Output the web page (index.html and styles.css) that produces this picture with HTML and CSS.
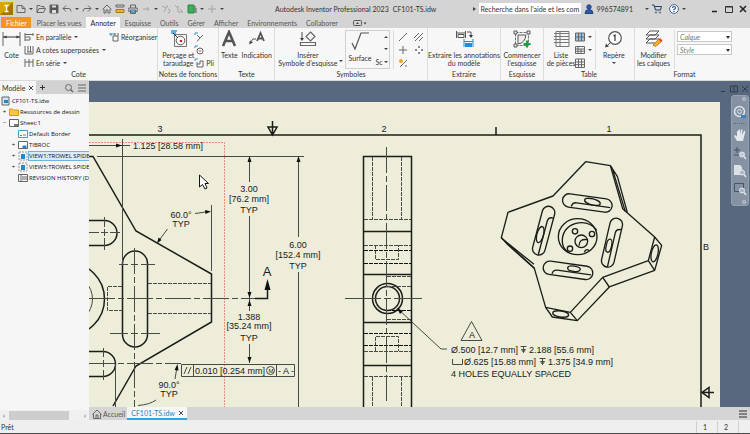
FILE: index.html
```html
<!DOCTYPE html>
<html lang="fr">
<head>
    <meta charset="UTF-8">
    <meta name="viewport" content="width=device-width, initial-scale=1.0">
    <title>Autodesk Inventor Professional 2023 - CF101-TS.idw</title>
    <link rel="stylesheet" href="styles.css">
</head>
<body>
    <div class="app">
        <header class="titlebar">
            <div class="quick">
                <button class="logo" aria-label="Inventor"><svg width="13" height="13" viewBox="0 0 13 13"><rect width="13" height="13" fill="#d9a300"/><path d="M0 13L13 0V13z" fill="#a87400"/><path d="M4.500 3.500h4M4.500 9.500h4M6.500 3.500v6" stroke="#fff" stroke-width="1.500"/></svg></button>
                <button aria-label="Nouveau"><svg class="ico" viewBox="0 0 10 10"><path d="M1 1.500h5l3 3v4H1zM6 1.500v3h3"/></svg></button>
                <span class="caret"></span>
                <button aria-label="Ouvrir"><svg class="ico" viewBox="0 0 10 10"><path d="M1 8.500v-7h3l1 1h3v2M1 8.500l2-4h6.500l-2 4z"/></svg></button>
                <button aria-label="Enregistrer"><svg class="ico" viewBox="0 0 10 10"><path d="M1 1h8v8H1z" fill="#555"/><path d="M3 1.500h4v2H3zM3 6h4v3H3z" fill="#ddd" stroke="none"/></svg></button>
                <button aria-label="Annuler"><svg class="ico" viewBox="0 0 10 10"><path d="M4 1.500L1 4.500l3 3M1 4.500h6q2 0 2 3"/></svg></button>
                <span class="caret"></span>
                <button aria-label="Rétablir"><svg class="ico" viewBox="0 0 10 10"><path d="M6 1.500l3 3-3 3M9 4.500H3q-2 0-2 3"/></svg></button>
                <span class="caret"></span>
                <button aria-label="Accueil"><svg class="ico" viewBox="0 0 10 10"><path d="M.500 5.500L5 1l4.500 4.500M2 5v4h2V6h2v3h2V5"/></svg></button>
                <button aria-label="Mesurer"><svg class="ico" viewBox="0 0 10 10"><path d="M1 1h8v2H1z"/><path d="M1 5.500h8v3H1z" fill="#f0b030" stroke="#b07a10"/></svg></button>
                <button aria-label="Imprimer"><svg class="ico" viewBox="0 0 10 10"><path d="M2.500 4V1h5v3M.800 4h8.400v3.500H.800zM2.500 6h5v3.500h-5z"/><path d="M3 6.500h4v2.500H3z" fill="#4aa3d8" stroke="none"/></svg></button>
                <button aria-label="Sélection"><svg class="ico pale" viewBox="0 0 10 10"><path d="M2 5h6M6 3l2 2-2 2"/></svg></button>
                <span class="caret"></span>
                <button aria-label="Matériau"><svg class="ico pale" viewBox="0 0 10 10"><path d="M1 2l4 2-2 4M6 1v3M7 5a2 2 0 1 1-.100 4"/></svg></button>
                <button aria-label="Apparence"><svg class="ico pale" viewBox="0 0 10 10"><path d="M1 1l3 3M4 2v6h5M6 5l3 3"/></svg></button>
                <button aria-label="iLogic"><svg class="ico" viewBox="0 0 10 10"><path d="M1 1h6v8H1z" fill="#3fae5a" stroke="#2b8a43"/><path d="M8 2v7M9 4v5" stroke="#666"/></svg></button>
                <span class="caret"></span>
                <button aria-label="Ajouter"><svg class="ico pale" viewBox="0 0 10 10"><path d="M1 5h8M5 1v8"/></svg></button>
                <span class="caret"></span>
            </div>
            <div class="app-title"><span>Autodesk Inventor Professional 2023</span><span>CF101-TS.idw</span></div>
            <div class="account">
                <span class="caret right"></span>
                <input class="search" type="text" aria-label="Recherche" value="Recherche dans l'aide et les com">
                <button class="user"><svg class="ico" viewBox="0 0 10 10"><circle cx="5" cy="3" r="2.200" fill="#2b5ca8" stroke="#1f4480"/><path d="M1 9.500q0-4 4-4t4 4z" fill="#2b5ca8" stroke="#1f4480"/></svg>996574891</button>
                <span class="caret"></span>
                <button class="cart" aria-label="Panier"><svg class="ico" viewBox="0 0 10 10"><path d="M0 1h2l1.500 5h5L9.500 2.500H3" stroke="#1f3f70"/><circle cx="4" cy="8.500" r=".700"/><circle cx="8" cy="8.500" r=".700"/></svg></button>
                <button aria-label="Aide"><svg class="ico" viewBox="0 0 10 10"><circle cx="5" cy="5" r="4.400" fill="#fff" stroke="#44638c"/><path d="M3.500 4q0-1.500 1.500-1.500T6.500 4Q6.500 4.800 5 5.500v.700M5 7v1" stroke="#1f4fa0" stroke-width="1.200"/></svg></button>
                <span class="caret"></span>
            </div>
            <div class="win">
                <button aria-label="Réduire"><svg class="ico" viewBox="0 0 10 10"><path d="M2 7.500h5" stroke="#222" stroke-width="1.500"/></svg></button>
                <button aria-label="Agrandir"><svg class="ico" viewBox="0 0 10 10"><path d="M1.500 2.500h7v6h-7zM1.500 3h7" stroke="#333"/></svg></button>
                <button aria-label="Fermer"><svg class="ico" viewBox="0 0 10 10"><path d="M2 2l6 6M8 2L2 8" stroke="#222" stroke-width="1.500"/></svg></button>
            </div>
        </header>

        <nav class="tabs">
            <button class="tab file">Fichier</button>
            <button class="tab">Placer les vues</button>
            <button class="tab active">Annoter</button>
            <button class="tab">Esquisse</button>
            <button class="tab">Outils</button>
            <button class="tab">Gérer</button>
            <button class="tab">Afficher</button>
            <button class="tab">Environnements</button>
            <button class="tab">Collaborer</button>
            <button class="tab toggle" aria-label="Affichage du ruban"><svg width="14" height="8" viewBox="0 0 14 8"><rect x=".500" y="1.500" width="8" height="5" rx="1" fill="none" stroke="#555"/><path d="M3 5l1.500-2L6 5zM10.500 3.500h3L12 5.500z" fill="#444"/></svg></button>
        </nav>

        <div class="ribbon">
            <section class="group g-cote">
                <div class="tools">
                    <button class="big"><svg width="19" height="18" viewBox="0 0 19 18"><path d="M1 2v14M18 2v14" stroke="#666" fill="none"/><path d="M1 7h17" stroke="#333"/><path d="M1.500 7l3-1.500v3zM17.500 7l-3-1.500v3z" fill="#333"/></svg>Cote</button>
                    <div class="stack">
                        <button><svg class="ico" viewBox="0 0 10 10"><path d="M1 1v8M9 1v3M1 2.500h8M1 5h5v3H1"/></svg>En parallèle <i class="caret"></i></button>
                        <button><svg class="ico" viewBox="0 0 10 10"><path d="M1 1v8h8V1M4 1v6M6.500 1v6M3 7h5"/></svg>A cotes superposées <i class="caret"></i></button>
                        <button><svg class="ico" viewBox="0 0 10 10"><path d="M1 1v8M5 1v8M9 1v8M1 4h8"/></svg>En série <i class="caret"></i></button>
                    </div>
                    <div class="stack">
                        <button><svg class="ico" viewBox="0 0 10 10"><path d="M0 2h6M2 1v3" stroke="#3a8fd0"/><path d="M4 4h5v5H4zM6 4V1M9 4V1"/></svg>Réorganiser</button>
                    </div>
                </div>
                <h2>Cote</h2>
            </section>
            <section class="group g-notes">
                <div class="tools">
                    <button class="big"><svg width="19" height="18" viewBox="0 0 19 18"><path d="M2 1h6M2 3h5" stroke="#2f9be0" stroke-width="1.400"/><path d="M5.500 4.500h12v12h-12z" fill="none" stroke="#777"/><circle cx="11.500" cy="10.500" r="4.300" fill="#fff" stroke="#555"/><path d="M4 3l5 5" stroke="#333"/><circle cx="12" cy="11" r="1.300" fill="#d02020"/></svg>Perçage et<br>taraudage</button>
                    <div class="stack">
                        <button aria-label="Chanfrein"><svg class="ico" viewBox="0 0 10 10"><path d="M1 1h3M1 1v2" stroke="#3a8fd0"/><path d="M3 3l3 3 3-3M6 6L3 9.500"/></svg></button>
                        <button aria-label="Poinçon"><svg class="ico" viewBox="0 0 10 10"><path d="M1 1h3M1 1v2" stroke="#3a8fd0"/><circle cx="6" cy="6" r="3"/><circle cx="6" cy="6" r=".800" fill="#d02020" stroke="none"/></svg></button>
                        <button><svg class="ico" viewBox="0 0 10 10"><path d="M1 1h3M1 1v2" stroke="#3a8fd0"/><path d="M3 4v5h6V3H6v3H3"/></svg>Pli</button>
                    </div>
                </div>
                <h2>Notes de fonctions</h2>
            </section>
            <section class="group g-texte">
                <div class="tools">
                    <button class="big"><svg width="16" height="18" viewBox="0 0 16 18"><path d="M2 16L8 2l6 14M4.500 11h7" fill="none" stroke="#555" stroke-width="2.600"/></svg>Texte</button>
                    <button class="big"><svg width="18" height="18" viewBox="0 0 18 18"><path d="M9 11l3.500-8L16 11M10.300 8.500h4.500" fill="none" stroke="#555" stroke-width="1.800"/><path d="M8 9H5l-3 4" fill="none" stroke="#555"/><path d="M1 14.500l1-4 3 2z" fill="#444"/></svg>Indication</button>
                </div>
                <h2>Texte</h2>
            </section>
            <section class="group g-symboles">
                <div class="tools">
                    <button class="big"><svg width="18" height="18" viewBox="0 0 18 18"><path d="M3 2v8M11.500 2l4.500 4.500-4.500 4.500L7 6.500zM1.500 12.500h15v3h-15z" fill="none" stroke="#666" stroke-width="1.200"/><path d="M1 8l2 3 2-3z" fill="#444"/></svg>Insérer<br>Symbole d'esquisse</button>
                    <i class="caret"></i>
                    <div class="gallery">
                        <button class="big"><svg width="20" height="20" viewBox="0 0 20 20"><path d="M2 12l3 6L11 2h8" fill="none" stroke="#555" stroke-width="1.200"/></svg>Surface</button>
                        <span class="cut">Sc</span>
                        <div class="scroller"><i class="caret up"></i><i class="caret"></i><i class="caret"></i></div>
                    </div>
                    <div class="iconset">
                        <button aria-label="Axe"><svg class="ico" viewBox="0 0 10 10"><path d="M1 9l8-8"/></svg></button>
                        <button aria-label="Hachures"><svg class="ico" viewBox="0 0 10 10"><path d="M0 6l5-5M1 9l8-8M5 9l4-4"/></svg></button>
                        <button aria-label="Marque de centre"><svg class="ico" viewBox="0 0 10 10"><path d="M1 5h8M5 1v8"/></svg></button>
                        <button aria-label="Réseau centré"><svg class="ico" viewBox="0 0 10 10"><path d="M5 1v2M5 7v2M1 5h2M7 5h2" stroke-width="1.500"/></svg></button>
                        <button aria-label="Axe automatique"><svg class="ico" viewBox="0 0 10 10"><path d="M2 9l7-7M7 8h2"/><circle cx="3" cy="3" r="2" fill="#f5a623" stroke="none"/></svg></button>
                    </div>
                </div>
                <h2>Symboles</h2>
            </section>
            <section class="group g-extraire">
                <div class="tools">
                    <button class="big"><svg width="19" height="18" viewBox="0 0 19 18"><path d="M1.500 1v7M10.500 1v7M1 3h10M3 4.500h6v3H3zM12 2h4v4" fill="none" stroke="#555"/><path d="M14 5h4l-2 3z" fill="#333"/><path d="M9 9v8M18 9v8M9 11.500h9" stroke="#1f8fdc"/><path d="M10 13h7v4h-7z" fill="#1f8fdc"/></svg>Extraire les annotations<br>du modèle</button>
                </div>
                <h2>Extraire</h2>
            </section>
            <section class="group g-esquisse">
                <div class="tools">
                    <button class="big"><svg width="19" height="18" viewBox="0 0 19 18"><path d="M2.500 2.500h13v13h-13z" fill="none" stroke="#777" stroke-dasharray="3 1"/><path d="M5 5v9q7-1 8-9zM1 1h3v3H1zM14 1h3v3h-3zM1 14h3v3H1z" fill="#eee" stroke="#555"/><path d="M14 10.500v7M10.500 14h7" stroke="#15a03c" stroke-width="2.200"/></svg>Commencer<br>l'esquisse</button>
                </div>
                <h2>Esquisse</h2>
            </section>
            <section class="group g-table">
                <div class="tools">
                    <button class="big"><svg width="19" height="18" viewBox="0 0 19 18"><path d="M2 3.500h15M4 1.500h13v15H4zM2 6.500h15M2 9.500h15M2 12.500h15M8 2v14" fill="none" stroke="#777"/></svg>Liste<br>de pièces</button>
                    <div class="stack">
                        <button aria-label="Table de perçages"><svg class="ico" viewBox="0 0 10 10"><path d="M.500 1h9v8h-9z" fill="#9cc4e4"/><path d="M3.500 1v8M6.500 1v8M1 5h8"/></svg><i class="caret"></i></button>
                        <button aria-label="Table de révisions"><svg class="ico" viewBox="0 0 10 10"><path d="M.500 1.500h9v7h-9zM.500 4h9M3 2v6M6 4v4M.500 6.200h9"/></svg><i class="caret"></i></button>
                        <button aria-label="Table générale"><svg class="ico" viewBox="0 0 10 10"><path d="M.500 1h9v8.500h-9zM.500 4h9M.500 6.700h9M3.500 1v8M6.500 1v8"/></svg></button>
                    </div>
                    <button class="big split"><svg width="19" height="18" viewBox="0 0 19 18"><circle cx="11" cy="8" r="6.300" fill="#fff" stroke="#555" stroke-width="1.200"/><path d="M9.500 6L11 5v6" fill="none" stroke="#333" stroke-width="1.200"/><path d="M6.500 12.500l-4 4" stroke="#555"/><path d="M1 17.500l1-4 3 3z" fill="#444"/></svg>Repère<i class="caret"></i></button>
                </div>
                <h2>Table</h2>
            </section>
            <section class="group g-format">
                <div class="tools">
                    <button class="big"><svg width="19" height="18" viewBox="0 0 19 18"><path d="M2 13l4-4h9l-4 4zM2 9l4-4h9l-4 4zM2 5l4-4h9l-4 4z" fill="#fff" stroke="#555"/><path d="M9 15l6-6 2.500 2.500-6 5z" fill="#f5b52a" stroke="#b97f14"/><path d="M14.500 9.500l1.500-1.500 2.500 2.500-1.500 1.500z" fill="#d8423a"/></svg>Modifier<br>les calques</button>
                    <div class="combos">
                        <span class="combo"><select aria-label="Calque"><option>Calque</option></select></span>
                        <span class="combo"><select aria-label="Style"><option>Style</option></select></span>
                    </div>
                </div>
                <h2>Format</h2>
            </section>
        </div>

        <main class="workspace">
            <aside class="browser">
                <div class="browser-tabs">
                    <button class="browser-tab">Modèle <svg width="6" height="6" viewBox="0 0 6 6"><path d="M1 1l4 4M5 1L1 5" stroke="#444"/></svg></button>
                    <button aria-label="Ajouter un panneau"><svg width="7" height="7" viewBox="0 0 7 7"><path d="M3.500 1v5M1 3.500h5" stroke="#333"/></svg></button>
                    <button class="push" aria-label="Rechercher"><svg class="ico" viewBox="0 0 10 10"><circle cx="4.500" cy="4.500" r="3"/><path d="M6.700 6.700L9 9" stroke-width="1.500"/></svg></button>
                    <button aria-label="Menu"><svg class="ico" viewBox="0 0 10 10"><path d="M1 2h8M1 5h8M1 8h8"/></svg></button>
                </div>
                <ul class="tree">
                    <li><svg class="ico" viewBox="0 0 10 10"><path d="M1 1h7v8H1z" fill="#cfe6f6"/><path d="M3 4h4v3H3z" fill="#2288cc" stroke="none"/></svg>CF101-TS.idw</li>
                    <li><b>+</b><svg class="ico" viewBox="0 0 10 10"><path d="M.500 2h3l1 1h5v5.500h-9z" fill="#f7c548" stroke="#d59b18"/></svg>Ressources de dessin</li>
                    <li><b>−</b><svg class="ico" viewBox="0 0 10 10"><path d="M.500 1.500h9v7h-9z" fill="#fff"/><path d="M5 6h4v2H5z" fill="#777" stroke="none"/></svg>Sheet:1</li>
                    <li class="sub"><b></b><svg class="ico" viewBox="0 0 10 10"><path d="M.500 1.500h9v7h-9z" fill="#fff" stroke="#4a98cc"/><path d="M2 6.500h2M5 6h3" stroke="#2f86c4"/></svg>Default Border</li>
                    <li class="sub"><b>+</b><svg class="ico" viewBox="0 0 10 10"><path d="M.500 1.500h9v7h-9z" fill="#fff"/><path d="M4.500 5.500h4v2.500h-4z" fill="#2288cc" stroke="none"/></svg>TIBROC</li>
                    <li class="sub"><b>+</b><svg class="ico" viewBox="0 0 10 10"><path d="M1 1h8v8H1z" stroke="#999" stroke-dasharray="2 1"/><path d="M3 3h4v5H3z" fill="#2288cc" stroke="none"/></svg><mark>VIEW1:TROWEL SPIDE</mark></li>
                    <li class="sub"><b>+</b><svg class="ico" viewBox="0 0 10 10"><path d="M1 1h8v8H1z" stroke="#999" stroke-dasharray="2 1"/><path d="M3 3h4v5H3z" fill="#2288cc" stroke="none"/></svg>VIEW5:TROWEL SPIDE</li>
                    <li class="sub"><b></b><svg class="ico" viewBox="0 0 10 10"><path d="M.500 1.500h9v7h-9zM3 2v6M4 4h5M4 6h5"/></svg>REVISION HISTORY (D</li>
                </ul>
                <div class="hscroll"><span>‹</span><div class="thumb"></div><span>›</span></div>
            </aside>

            <div class="document">
                <div class="canvas">
                    <svg class="sheet" viewBox="89 102 631 305" preserveAspectRatio="xMinYMin slice">
                        <!-- sheet border and zone marks -->
                        <g class="edge">
                            <path d="M89 135H701V407"/>
                            <path d="M496 127v8M272.500 121v14M268 127h9l-4.500 8zM702 392.500h12M709 387.500v10l-7-5z"/>
                        </g>
                        <path class="select" d="M89 142.500H224.500V407"/>

                        <!-- front view -->
                        <g class="edge">
                            <path d="M89 156.500h4L136 231l75.500 43v48L136 366l-23 40"/>
                            <rect x="122.500" y="251" width="25" height="96" rx="12.500"/>
                            <path d="M89 220.500h15.500a12.500 12.500 0 0 1 0 25H89M89 351.500h14a12.500 12.500 0 0 1 0 25H89"/>
                            <circle cx="68" cy="299" r="36.500"/>
                        </g>
                        <g class="thin">
                            <circle cx="68" cy="299" r="24.500"/>
                            <path d="M122.500 139v125M89 145.500h41M97 156.500h207M211.500 205v66M115.500 364v43"/>
                            <path d="M104.500 217v10M104.500 229v7M104.500 238v12M89 232.500h10M101 232.500h7M110 232.500h10"/>
                            <path d="M103.500 348v9M103.500 360v7M103.500 370v10M119 264.500h9M131 264.500h7M141 264.500h14M110 333.500h18M131 333.500h7M141 333.500h19"/>
                            <path class="center" d="M134.500 248V407M89 298.500H246M89 363.500h92"/>
                            <path class="hidden" d="M148 283.500h63M148 313.500h63M122 286.500h-14.500v24h15"/>
                            <path d="M195 213.500l14-2M167.500 229l-9 12M175 379l2-12M138 405.500q12-1 18-5.500"/>
                        </g>

                        <!-- dimensions -->
                        <g class="thin">
                            <path d="M249.500 158v24M249.500 216v95M249.500 344v19M298.500 158v79M298.500 272v135M244 298.500h12"/>
                            <path d="M181.500 364.500h113v12h-113zM193.500 364.500v12M276.500 364.500v12M184 374l3-7M188 374l3-7"/>
                            <circle cx="270.500" cy="370.500" r="4"/>
                        </g>
                        <path class="edge" d="M255 298.500h12.500V286"/>
                        <path class="fill" d="M122 145.500l-6-2v4zM249.500 156l-2 6h4zM298.500 156l-2 6h4zM249.500 298l-2-6h4zM249.500 300l-2 6h4zM249.500 363l-2-6h4zM211 211.500l-6-1.500.500 4zM157 243.500l1.500-6 3 2.500zM177.500 364l-3 6 4 .500zM267.500 279l-3 11h6z"/>
                        <g class="note mid">
                            <text x="160" y="132">3</text>
                            <text x="384" y="132">2</text>
                            <text x="609" y="132">1</text>
                            <text x="706" y="250">B</text>
                            <text x="181" y="218">60.0°</text>
                            <text x="181" y="227">TYP</text>
                            <text x="249" y="192">3.00</text>
                            <text x="249" y="202">[76.2 mm]</text>
                            <text x="249" y="213">TYP</text>
                            <text x="298" y="248">6.00</text>
                            <text x="298" y="258">[152.4 mm]</text>
                            <text x="298" y="269">TYP</text>
                            <text x="249" y="320">1.388</text>
                            <text x="249" y="329">[35.24 mm]</text>
                            <text x="249" y="341">TYP</text>
                            <text x="169" y="388">90.0°</text>
                            <text x="169" y="397">TYP</text>
                            <text x="286" y="374">- A -</text>
                            <text x="472" y="338">A</text>
                            <text class="letter" x="267" y="276">A</text>
                            <text class="tiny" x="271" y="373">M</text>
                        </g>
                        <g class="note">
                            <text x="133" y="149">1.125 [28.58 mm]</text>
                            <text x="195" y="374">0.010 [0.254 mm]</text>
                            <text x="451" y="353">Ø.500 [12.7 mm]</text>
                            <text x="529" y="353">2.188 [55.6 mm]</text>
                            <text x="464" y="365">Ø.625 [15.88 mm]</text>
                            <text x="548" y="365">1.375 [34.9 mm]</text>
                            <text x="451" y="377">4 HOLES EQUALLY SPACED</text>
                        </g>
                        <path class="thin" d="M520.500 346.500h6M523.500 346.500v6M521.500 349.500h4l-2 3zM539.500 358.500h6M542.500 358.500v6M540.500 361.500h4l-2 3zM452.500 359v5.500h10V359M398 309l43 40h6M471.500 321.500l-10.500 19h21z"/>

                        <!-- side view -->
                        <g class="edge">
                            <path d="M363.500 407V156.500h48V407M363.500 231.500h48M363.500 274.500h48M363.500 322.500h48M363.500 365.500h48"/>
                            <circle cx="387.500" cy="298.500" r="15"/>
                            <circle cx="387.500" cy="298.500" r="12"/>
                        </g>
                        <g class="thin">
                            <path class="hidden" d="M372.500 157v62M401.500 157v62M364 219.500h47M364 245.500h47M375.500 245v14.500h23V245M387 276.500h24M387 286.500h24M387 319.500h24M364 351.500h47M375.500 351v-14.500h23V351M364 376.500h47M372.500 377v30M401.500 377v30"/>
                            <path class="hidden bold" d="M364 250.500h47M364 263.500h47M387 310.500h24M364 333.500h47M364 345.500h47"/>
                            <path class="center" d="M386.500 147v256"/>
                            <path d="M345 298.500h36M384 298.500h7M394 298.500h28"/>
                        </g>
                        <path class="fill" d="M397 308l6 3-3 3z"/>

                        <!-- isometric view, drawn at three times its size -->
                        <g class="iso" transform="translate(480 115) scale(.33333)">
                            <path d="M317 140L391 152L428 281L524 366L545 391L524 466L388 516L292 617L217 606L197 577L163 460L64 368L84 292L219 243Z"/>
                            <path d="M391 152L412 184L442 292M396 158L436 290M64 368L82 388L163 460M66 371L162 448M524 366L505 437L524 466M505 437L368 487L388 516M368 487L271 592L292 617M271 592L197 577"/>
                            <ellipse cx="524" cy="415" rx="10" ry="26" transform="rotate(12 524 415)"/>
                            <ellipse cx="242" cy="597" rx="24" ry="9" transform="rotate(8 242 597)"/>
                            <g transform="translate(322 264) rotate(8)">
                                <rect x="-75" y="-20" width="150" height="40" rx="20"/>
                                <path d="M-46 17q2-13 14-13H70"/>
                                <ellipse cx="14" cy="-7" rx="24" ry="9" transform="rotate(6)"/>
                            </g>
                            <g transform="translate(264 466) rotate(8)">
                                <rect x="-75" y="-20" width="150" height="40" rx="20"/>
                                <path d="M-46 17q2-13 14-13H70"/>
                                <ellipse cx="17" cy="-7" rx="19" ry="8"/>
                            </g>
                            <g transform="translate(191 347) rotate(15)">
                                <rect x="-19" y="-75" width="38" height="150" rx="19"/>
                                <path d="M18-44Q3-44 3-30V74"/>
                                <ellipse cx="-7" cy="14" rx="10" ry="25"/>
                            </g>
                            <g transform="translate(396 383) rotate(13)">
                                <rect x="-19" y="-75" width="38" height="150" rx="19"/>
                                <path d="M18-44Q3-44 3-30V74"/>
                                <ellipse cx="-7" cy="11" rx="8" ry="20"/>
                            </g>
                            <ellipse cx="293" cy="365" rx="58" ry="54"/>
                            <path d="M350 345Q325 315 285 326Q245 340 247 382Q250 405 268 414"/>
                            <circle cx="285" cy="349" r="8"/>
                            <circle cx="336" cy="357" r="8"/>
                            <circle cx="270" cy="401" r="8"/>
                            <circle cx="304" cy="379" r="19"/>
                            <path d="M322 374q-24-4-25 18M313 412q4-12 14-6"/>
                        </g>

                        <path class="pointer" d="M199.500 175v12l3-2.500 2.500 4.500 2-1-2-4.500h3.500z"/>
                    </svg>
                    <div class="doc-win">
                        <button aria-label="Réduire"><svg class="ico" viewBox="0 0 10 10"><path d="M3 7.500h4"/></svg></button>
                        <button aria-label="Restaurer"><svg class="ico" viewBox="0 0 10 10"><path d="M1.500 2h7v6h-7zM5 2v6"/></svg></button>
                        <button aria-label="Fermer"><svg class="ico" viewBox="0 0 10 10"><path d="M2 2l6 6M8 2L2 8"/></svg></button>
                    </div>
                    <div class="navbar">
                        <i class="knob"></i>
                        <button aria-label="Disque de navigation"><svg viewBox="0 0 14 14"><circle cx="6.500" cy="6.500" r="5" fill="none" stroke="#dde3ea" stroke-width="1.500"/><circle cx="6.500" cy="6.500" r="2" fill="none" stroke="#dde3ea"/><path d="M8 10h5v3H8z" fill="#3f7fc8"/></svg></button>
                        <hr>
                        <button aria-label="Panoramique"><svg viewBox="0 0 14 14"><path d="M4 13L1 8l1-1 2 1.500V3h1.500v4V1.500H7V7l1-5.500h1.500L9 7l2-4h1.500L11 9l-1 4z" fill="#e4e8ed"/></svg></button>
                        <button aria-label="Zoom"><svg viewBox="0 0 14 14"><path d="M4 1v6M1 4h6M1 9h5" stroke="#46556a"/><circle cx="9" cy="8.500" r="2.500" fill="#c3ccd6" stroke="#e4e8ed"/><path d="M11 10.500l2 2.500" stroke="#e4e8ed" stroke-width="1.500"/></svg></button>
                        <button aria-label="Zoom tout"><svg viewBox="0 0 14 14"><path d="M1 1h6l2 2v8H1z" fill="#dbe0e6"/><circle cx="9" cy="8.500" r="2.500" fill="#a9b6c4" stroke="#e4e8ed"/><path d="M11 10.500l2 2.500" stroke="#e4e8ed" stroke-width="1.500"/></svg></button>
                        <button aria-label="Zoom fenêtre"><svg viewBox="0 0 14 14"><path d="M1.500 1.500h9v8h-9z" fill="none" stroke="#46556a"/><circle cx="9" cy="8.500" r="2.500" fill="#a9b6c4" stroke="#e4e8ed"/><path d="M11 10.500l2 2.500" stroke="#e4e8ed" stroke-width="1.500"/></svg></button>
                        <i class="knob"></i>
                    </div>
                </div>
                <div class="doc-tabs">
                    <button class="doc-tab home"><svg class="ico" viewBox="0 0 10 10"><path d="M.500 5.500L5 1l4.500 4.500M1.500 5v4.500h7V5M4 9V6h2v3"/></svg>Accueil</button>
                    <button class="doc-tab current">CF101-TS.idw <svg width="6" height="6" viewBox="0 0 6 6"><path d="M1 1l4 4M5 1L1 5" stroke="#444"/></svg></button>
                    <button class="push" aria-label="Liste des documents"><svg class="ico" viewBox="0 0 10 10"><path d="M1 2h8M1 5h8M1 8h8" stroke-width="1.500"/></svg></button>
                </div>
            </div>
        </main>

        <footer class="status">
            <span class="ready">Prêt</span>
            <span class="cell">1</span>
            <span class="cell">2</span>
            <span class="grip"></span>
        </footer>
    </div>
</body>
</html>
```
FILE: styles.css
```css
* {
    box-sizing: border-box;
}

body {
    margin: 0;
    font-family: Lato, "Open Sans", sans-serif;
    font-size: 7px;
    line-height: 8px;
    color: #333;
    background: #d6d6d6;
}

button {
    display: flex;
    align-items: center;
    padding: 0;
    border: none;
    background: none;
    font: inherit;
    color: inherit;
    white-space: nowrap;
}

svg {
    flex: none;
    display: block;
}

.app {
    display: flex;
    flex-direction: column;
    height: 100vh;
    overflow: hidden;
    border-bottom: 1px solid #4a4a4a;
}

.ico {
    width: 10px;
    height: 10px;
    fill: none;
    stroke: #666;
}

.pale {
    stroke: #a4a4a4;
}

.caret {
    flex: none;
    width: 4px;
    border: 2px solid transparent;
    border-top-color: #444;
    border-bottom: none;
}

.caret.up {
    border-top: none;
    border-bottom: 2px solid #444;
}

.caret.right {
    width: 3px;
    border: 2px solid transparent;
    border-left: 3px solid #444;
    border-right: none;
}

.push {
    margin-left: auto;
}

/* title bar */
.titlebar {
    display: flex;
    align-items: center;
    height: 17px;
    flex: none;
    background: #d4d4d4;
}

.quick {
    display: flex;
    align-items: center;
    gap: 3px;
    width: 275px;
}

.app-title {
    display: flex;
    gap: 4px;
    flex: 1;
    white-space: nowrap;
}

.account {
    display: flex;
    align-items: center;
    gap: 3px;
}

.search {
    width: 102px;
    height: 11px;
    padding: 0 1px;
    border: none;
    background: #fff;
    font: inherit;
    color: #333;
}

.user {
    gap: 2px;
    margin-right: 9px;
}

.cart {
    margin-right: 4px;
}

.win {
    display: flex;
    gap: 4px;
    padding: 0 2px 0 24px;
}

/* ribbon tabs */
.tabs {
    display: flex;
    flex: none;
    height: 11px;
    background: #d4d4d4;
}

.tab {
    padding: 0 4px 0 5px;
    color: #555;
}

.tab.file {
    margin: 0 1px;
    background: #f7941d;
    color: #fff;
}

.tab.active {
    background: #fafafa;
    color: #222;
}

.tab.toggle {
    margin-left: 6px;
}

/* ribbon */
.ribbon {
    display: flex;
    flex: none;
    height: 53px;
    background: #f7f7f7;
    border-bottom: 1px solid #d8d8d8;
}

.group {
    display: flex;
    flex-direction: column;
    flex: none;
    border-right: 1px solid #dcdcdc;
}

.group h2 {
    margin: 0;
    font-size: 7px;
    font-weight: 400;
    line-height: 10px;
    text-align: center;
}

.tools {
    display: flex;
    justify-content: center;
    height: 41px;
    padding-top: 2px;
}

.g-cote { width: 158px; }
.g-notes { width: 61px; }
.g-texte { width: 56px; }
.g-symboles { width: 153px; }
.g-extraire { width: 73px; }
.g-esquisse { width: 43px; }
.g-table { width: 91px; }
.g-format { width: 99px; border-right: none; }

.big {
    flex-direction: column;
    justify-content: flex-start;
    text-align: center;
    line-height: 8px;
}

.big svg {
    margin-bottom: 3px;
}

.g-cote .tools {
    justify-content: flex-start;
    gap: 3px;
    padding-left: 2px;
}

.g-texte .tools {
    gap: 4px;
}

.stack {
    display: flex;
    flex-direction: column;
}

.stack button {
    gap: 2px;
    height: 13px;
}

.stack .caret {
    margin-left: 1px;
}

.g-symboles .tools > .caret {
    margin: 30px 2px 0 1px;
}

.gallery {
    display: flex;
    height: 39px;
    border: 1px solid #d0d0d0;
    padding-left: 3px;
}

.cut {
    align-self: flex-end;
    margin-left: 4px;
    line-height: 12px;
}

.scroller {
    display: flex;
    flex-direction: column;
    justify-content: space-around;
    padding: 0 1px;
}

.iconset {
    display: grid;
    grid-template-columns: 10px 10px;
    grid-auto-rows: 13px;
    column-gap: 6px;
    margin-left: 3px;
    padding-left: 4px;
    border-left: 1px solid #dcdcdc;
}

.split {
    width: 36px;
    margin-left: 3px;
    border-left: 1px solid #dcdcdc;
}

.split .caret {
    margin-top: 3px;
}

.combos {
    display: flex;
    flex-direction: column;
    gap: 2px;
    margin-left: 4px;
    padding: 1px 0 0 2px;
    border-left: 1px solid #dcdcdc;
}

.combo {
    position: relative;
    display: block;
}

.combo::after {
    content: "";
    position: absolute;
    right: 2px;
    top: 5px;
    border: 2px solid transparent;
    border-top: 3px solid #333;
    border-bottom: none;
}

.combo select {
    display: block;
    appearance: none;
    width: 55px;
    height: 11px;
    padding: 0 2px;
    border: 1px solid #c8c8c8;
    border-radius: 0;
    background: #fff;
    font: inherit;
    font-style: italic;
    color: #777;
}

/* model browser */
.workspace {
    display: flex;
    flex: 1;
    min-height: 0;
}

.browser {
    display: flex;
    flex-direction: column;
    width: 89px;
    flex: none;
    background: #f6f6f6;
}

.browser-tabs {
    display: flex;
    align-items: center;
    gap: 3px;
    height: 13px;
    padding-right: 2px;
    background: #d2d2d2;
}

.browser-tab {
    gap: 3px;
    height: 13px;
    padding: 0 2px;
    background: #f6f6f6;
}

.tree {
    flex: 1;
    margin: 0;
    padding: 1px 0 0 1px;
    list-style: none;
    overflow: hidden;
    font-family: "Open Sans", "Noto Sans", sans-serif;
    font-size: 6px;
    font-weight: 500;
}

.tree li {
    display: flex;
    align-items: center;
    height: 11px;
    gap: 1px;
    white-space: nowrap;
    color: #111;
}

.tree b {
    flex: none;
    width: 7px;
    font-weight: 400;
    text-align: center;
}

.tree .sub {
    padding-left: 9px;
}

.tree mark {
    background: #d8ebf8;
    outline: 1px solid #6fb4e0;
    color: inherit;
}

.hscroll {
    display: flex;
    align-items: center;
    gap: 4px;
    height: 10px;
    padding: 0 3px;
    background: #f0f0f0;
}

.hscroll .thumb {
    width: 60px;
    height: 9px;
    background: #cdcdcd;
}

.hscroll span:last-child {
    margin-left: auto;
}

/* drawing window */
.document {
    display: flex;
    flex-direction: column;
    flex: 1;
    min-width: 0;
}

.canvas {
    position: relative;
    display: flex;
    flex: 1;
    min-height: 0;
    padding: 21px 30px 0 0;
    background: #58697f;
}

.sheet {
    flex: 1;
    min-width: 0;
    height: 100%;
    background: #ededd9;
}

.doc-win {
    position: absolute;
    top: 3px;
    right: 0;
    display: flex;
    gap: 1px;
}

.doc-win .ico {
    stroke: #333b46;
}

.navbar {
    position: absolute;
    top: 14px;
    right: 1px;
    display: flex;
    flex-direction: column;
    align-items: center;
    gap: 4px;
    width: 18px;
    padding: 1px 0;
    border: 1px solid #95a1b0;
    border-radius: 3px;
    background: #8592a3;
}

.navbar svg {
    width: 14px;
    height: 14px;
}

.navbar hr {
    width: 12px;
    margin: 0;
    border: none;
    border-top: 1px dotted #5a6a80;
}

.knob {
    align-self: flex-end;
    width: 4px;
    height: 4px;
    margin-right: 2px;
    border: 1px solid #c8d0da;
    border-radius: 50%;
}

/* strokes of the drawing */
.edge,
.thin,
.iso {
    fill: none;
    stroke: #1c1c1a;
}

.edge {
    stroke-width: 1.5;
}

.thin {
    stroke: #4a4a44;
    stroke-width: 1;
}

.iso {
    stroke-width: 4;
    stroke-linejoin: round;
}

.fill {
    fill: #111;
}

.hidden {
    stroke-dasharray: 4 1;
}

.bold {
    stroke: #111;
}

.center {
    stroke-dasharray: 26 3 6 3;
}

.select {
    fill: none;
    stroke: #f08c7c;
    stroke-dasharray: 2 1;
}

.note {
    font-family: "Liberation Sans", Arial, sans-serif;
    font-size: 9px;
    fill: #1a1a1a;
}

.mid {
    text-anchor: middle;
}

.letter {
    font-size: 13px;
}

.tiny {
    font-size: 6px;
}

.pointer {
    fill: #fff;
    stroke: #111;
}

/* document tabs and status bar */
.doc-tabs {
    display: flex;
    flex: none;
    height: 13px;
    padding-right: 2px;
    background: #d5d5d5;
}

.doc-tab {
    gap: 1px;
    padding: 0 2px 0 3px;
    color: #555;
}

.doc-tab.current {
    gap: 3px;
    padding: 1px 3px 0 4px;
    border-bottom: 2px solid #2fa5dd;
    background: #f6f6f6;
    color: #1f86c0;
}

.status {
    display: flex;
    align-items: center;
    flex: none;
    height: 13px;
    padding-left: 1px;
    background: #efefef;
}

.ready {
    flex: 1;
}

.cell {
    width: 21px;
    padding-left: 6px;
    border-left: 1px solid #cfcfcf;
    line-height: 12px;
}

.grip {
    width: 12px;
    height: 12px;
    border-left: 1px solid #cfcfcf;
}
```
